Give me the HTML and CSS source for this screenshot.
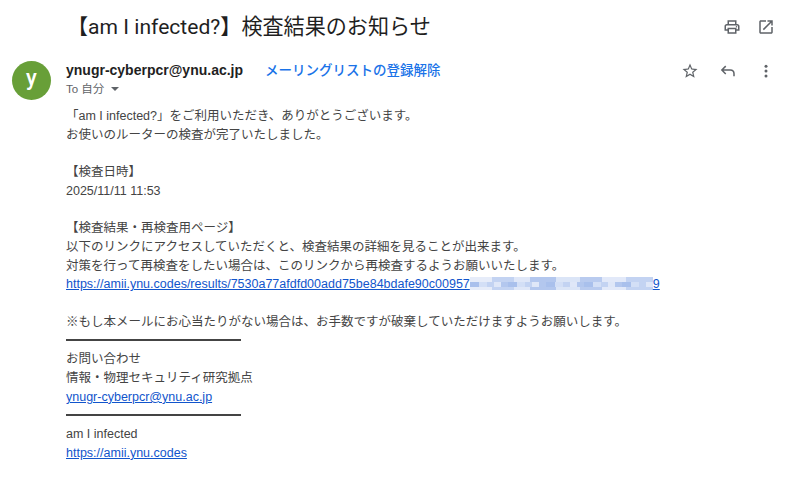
FILE: index.html
```html
<!DOCTYPE html>
<html lang="ja">
<head>
<meta charset="utf-8">
<title>検査結果のお知らせ</title>
<link rel="stylesheet" href="styles.css">
</head>
<body>
<div class="page">
  <header class="subject-row">
    <h1 class="subject">【am I infected?】検査結果のお知らせ</h1>
    <div class="top-icons">
      <svg class="icon" viewBox="0 0 24 24"><path d="M19 8h-1V3H6v5H5c-1.66 0-3 1.34-3 3v6h4v4h12v-4h4v-6c0-1.66-1.34-3-3-3zM8 5h8v3H8V5zm8 14H8v-4h8v4zm4-4h-2v-2H6v2H4v-4c0-.55.45-1 1-1h14c.55 0 1 .45 1 1v4z"/><circle cx="18" cy="11.5" r="1"/></svg>
      <svg class="icon" viewBox="0 0 24 24"><path d="M19 19H5V5h7V3H5c-1.11 0-2 .9-2 2v14c0 1.1.89 2 2 2h14c1.1 0 2-.9 2-2v-7h-2v7zM14 3v2h3.59l-9.83 9.83 1.41 1.41L19 6.41V10h2V3h-7z"/></svg>
    </div>
  </header>
  <section class="message">
    <div class="avatar">y</div>
    <div class="main">
      <div class="sender-row">
        <div class="sender-info">
          <div class="sender-line">
            <span class="sender">ynugr-cyberpcr@ynu.ac.jp</span>
            <a class="unsub">メーリングリストの登録解除</a>
          </div>
          <div class="to">To 自分 <span class="caret"></span></div>
        </div>
        <div class="msg-icons">
          <svg class="icon" viewBox="0 0 24 24"><path d="M22 9.24l-7.19-.62L12 2 9.19 8.63 2 9.24l5.46 4.73L5.82 21 12 17.27 18.18 21l-1.63-7.03L22 9.24zM12 15.4l-3.76 2.27 1-4.28-3.32-2.88 4.38-.38L12 6.1l1.71 4.04 4.38.38-3.32 2.88 1 4.28L12 15.4z"/></svg>
          <svg class="icon icon-line" viewBox="0 0 24 24"><path d="M9 5.5 3.8 10.7 9 15.9M4.2 10.7H15c3 0 5 2 5 5V19"/></svg>
          <svg class="icon" viewBox="0 0 24 24"><circle cx="12" cy="5.5" r="2"/><circle cx="12" cy="12" r="2"/><circle cx="12" cy="18.5" r="2"/></svg>
        </div>
      </div>
      <div class="body-text">
        <p>「am I infected?」をご利用いただき、ありがとうございます。</p>
        <p>お使いのルーターの検査が完了いたしました。</p>
        <p class="blank"></p>
        <p>【検査日時】</p>
        <p>2025/11/11 11:53</p>
        <p class="blank"></p>
        <p>【検査結果・再検査用ページ】</p>
        <p>以下のリンクにアクセスしていただくと、検査結果の詳細を見ることが出来ます。</p>
        <p>対策を行って再検査をしたい場合は、このリンクから再検査するようお願いいたします。</p>
        <p><a class="link">https://amii.ynu.codes/results/7530a77afdfd00add75be84bdafe90c00957<span class="blur"></span>9</a></p>
        <p class="blank"></p>
        <p>※もし本メールにお心当たりがない場合は、お手数ですが破棄していただけますようお願いします。</p>
        <p class="rule-line"><span class="rule"></span></p>
        <p>お問い合わせ</p>
        <p>情報・物理セキュリティ研究拠点</p>
        <p><a class="link">ynugr-cyberpcr@ynu.ac.jp</a></p>
        <p class="rule-line"><span class="rule"></span></p>
        <p>am I infected</p>
        <p><a class="link">https://amii.ynu.codes</a></p>
      </div>
    </div>
  </section>
</div>
</body>
</html>
```
FILE: styles.css
```css
* { box-sizing: border-box; }
html, body { margin: 0; padding: 0; background: #fff; }
body {
  width: 800px;
  height: 498px;
  overflow: hidden;
  font-family: "Liberation Sans", "Noto Sans CJK JP", sans-serif;
  color: #444;
}
.page { padding: 13px 25px 0 12px; }
.subject-row {
  display: flex;
  justify-content: space-between;
  align-items: center;
  height: 28px;
  padding-left: 55px;
}
.subject {
  margin: 0;
  font-family: Roboto, "Noto Sans CJK JP", sans-serif;
  font-size: 21.1px;
  font-weight: 400;
  line-height: 28px;
  color: #1f1f1f;
}
.top-icons { display: flex; gap: 16px; }
.icon { width: 18px; height: 18px; fill: #5f6368; display: block; }
.icon-line { fill: none; stroke: #5f6368; stroke-width: 2; }
.message { display: flex; gap: 15px; margin-top: 19px; }
.avatar {
  flex: none;
  width: 39px;
  height: 39px;
  margin-top: 1px;
  border-radius: 50%;
  background: #689f38;
  color: #fff;
  font-family: Roboto, sans-serif;
  font-size: 22px;
  font-weight: 500;
  line-height: 34px;
  text-align: center;
}
.main { flex: 1; min-width: 0; }
.sender-row { display: flex; justify-content: space-between; align-items: flex-start; }
.sender-line { display: flex; gap: 22px; align-items: baseline; line-height: 20px; }
.sender { font-size: 14px; font-weight: 700; color: #1f1f1f; }
.unsub { font-size: 13.5px; color: #1a73e8; font-weight: 500; }
.to { font-size: 11.5px; line-height: 16px; color: #5f6368; }
.caret {
  display: inline-block;
  margin-left: 3px;
  vertical-align: 2px;
  border: 4px solid transparent;
  border-top-color: #5f6368;
  border-bottom: 0;
}
.msg-icons { display: flex; gap: 20px; padding-top: 2px; }
.body-text { margin-top: 10px; font-size: 12.5px; line-height: 18.72px; }
.body-text p { margin: 0; height: 18.72px; white-space: nowrap; }
.link { color: #1155cc; text-decoration: underline; }
.blur {
  display: inline-block;
  width: 183px;
  height: 13px;
  vertical-align: -2px;
  background-color: #d3dff6;
  background-image:
    repeating-linear-gradient(90deg, #a9c0ec 0 9px, #d3dff6 9px 17px, #c3d3f2 17px 24px, #dfe7f8 24px 31px, #b3c7ee 31px 38px),
    linear-gradient(90deg, #e6ecf9 0 12%, #c3d3f2 12% 24%, #dfe7f8 24% 33%, #b3c7ee 33% 47%, #dbe5f7 47% 60%, #b9cbef 60% 72%, #e2e9f9 72% 85%, #c3d3f2 85% 100%);
  background-size: 183px 5px, 183px 13px;
  background-position: 0 5px, 0 0;
  background-repeat: no-repeat;
}
.rule-line { display: flex; align-items: center; }
.rule { display: block; width: 175px; height: 2px; background: #444; transform: translateY(-1px); }
```
